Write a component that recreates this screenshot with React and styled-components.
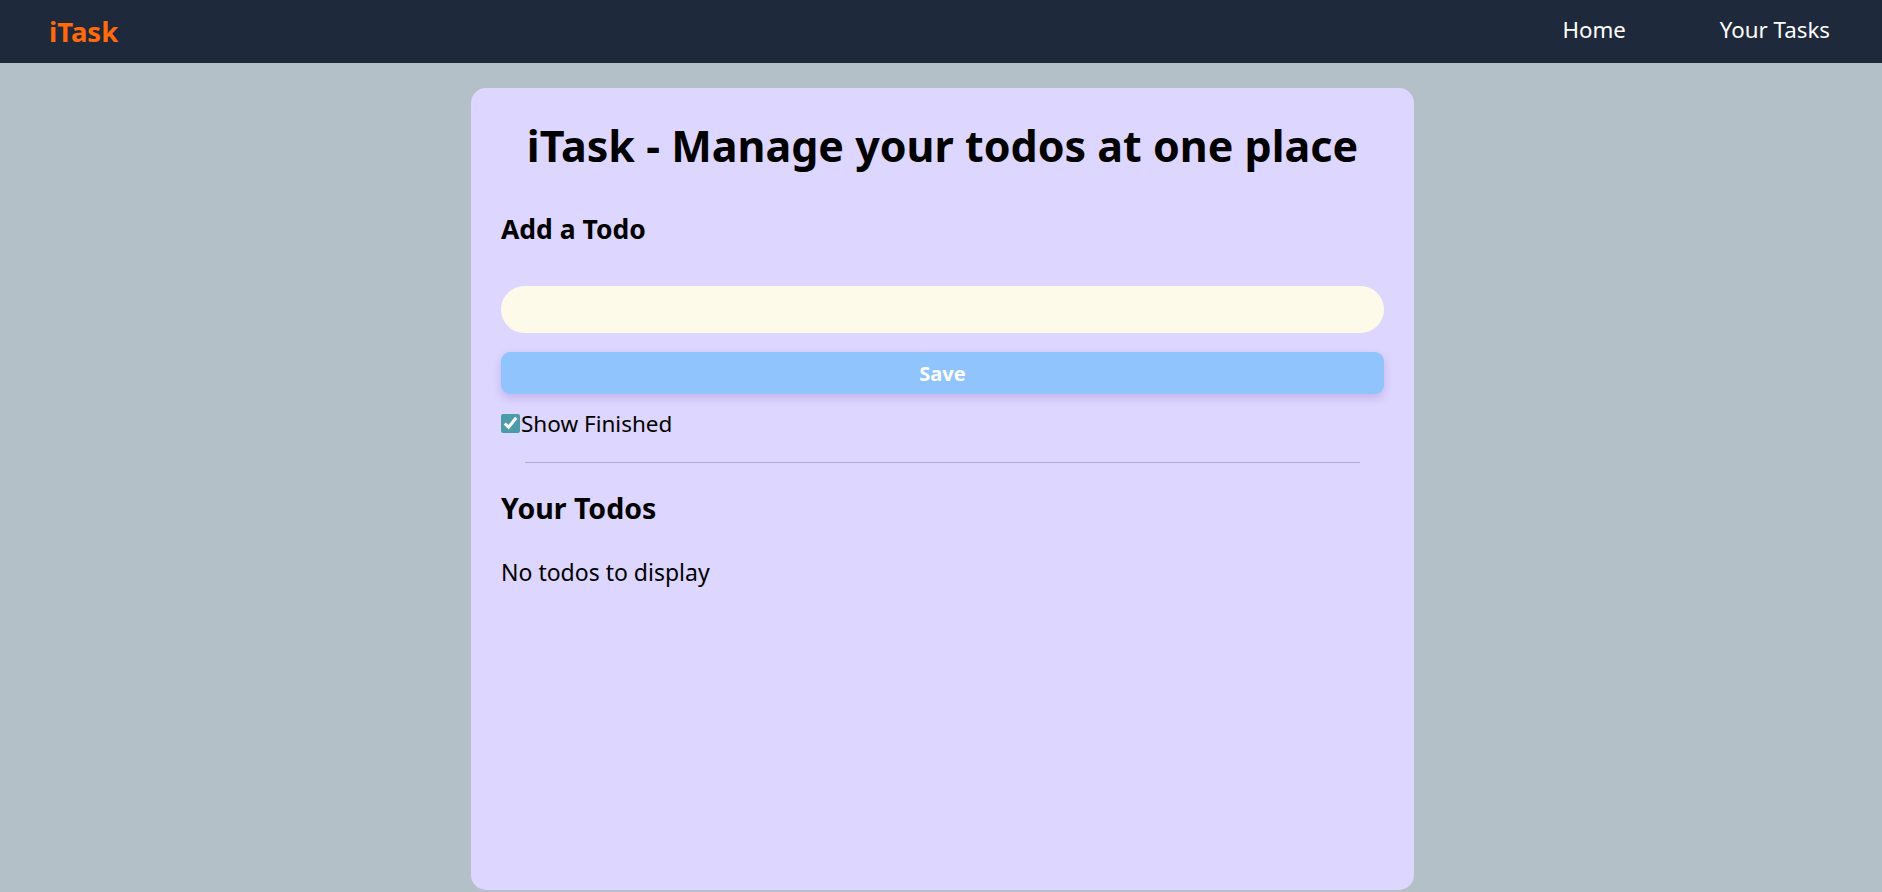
import { useState } from "react";
import styled, { createGlobalStyle } from "styled-components";

const navBg = "#1e293b";
const pageBg = "#b3c0c7";
const cardBg = "#ddd6fe";
const orange = "#ff6a0a";

const GlobalStyle = createGlobalStyle`
  * { box-sizing: border-box; }
  html, body {
    margin: 0;
    padding: 0;
    background: ${pageBg};
    font-family: "Noto Sans", "Open Sans", sans-serif;
    color: #000;
  }
`;

const App = () => {
  const [todo, setTodo] = useState("");
  const [showFinished, setShowFinished] = useState(true);

  return (
    <>
      <GlobalStyle />
      <Nav>
        <Logo>iTask</Logo>
        <NavList>
          <NavItem>Home</NavItem>
          <NavItem>Your Tasks</NavItem>
        </NavList>
      </Nav>
      <Card>
        <Title>iTask - Manage your todos at one place</Title>
        <SectionTitle>Add a Todo</SectionTitle>
        <TodoInput value={todo} onChange={(e) => setTodo(e.target.value)} />
        <SaveButton disabled={todo.length <= 3}>Save</SaveButton>
        <CheckRow>
          <Check
            type="checkbox"
            checked={showFinished}
            onChange={() => setShowFinished(!showFinished)}
          />
          Show Finished
        </CheckRow>
        <Divider />
        <TodosTitle>Your Todos</TodosTitle>
        <Empty>No todos to display</Empty>
      </Card>
    </>
  );
};

export default App;

const Nav = styled.nav`
  display: flex;
  justify-content: space-between;
  align-items: center;
  height: 63px;
  padding: 0 52px 0 49px;
  background: ${navBg};
  color: #fff;
`;

const Logo = styled.span`
  font-size: 27.5px;
  font-weight: 700;
  color: ${orange};
`;

const NavList = styled.ul`
  display: flex;
  gap: 94px;
  margin: 0 0 4px;
  padding: 0;
  list-style: none;
`;

const NavItem = styled.li`
  font-size: 22.3px;
  cursor: pointer;
`;

const Card = styled.main`
  display: flex;
  flex-direction: column;
  width: 943px;
  height: 802px;
  margin: 25px 0 0 calc(50% - 470px);
  padding: 33px 30px;
  background: ${cardBg};
  border-radius: 15px;
`;

const Title = styled.h1`
  margin: 0;
  font-size: 43px;
  line-height: 50px;
  font-weight: 700;
  text-align: center;
`;

const SectionTitle = styled.h2`
  margin: 41px 0 0;
  font-size: 26.5px;
  line-height: 35px;
  font-weight: 700;
`;

const TodoInput = styled.input`
  margin-top: 39px;
  height: 47px;
  padding: 0 20px;
  border: none;
  border-radius: 999px;
  background: #fefae9;
  font: inherit;
  font-size: 20px;
  outline: none;
`;

const SaveButton = styled.button`
  margin-top: 19px;
  height: 42px;
  border: none;
  border-radius: 9px;
  background: #8fc4fd;
  color: #fff;
  font: inherit;
  font-size: 20px;
  font-weight: 700;
  box-shadow: 0 4px 8px rgba(90, 70, 170, 0.22);
  cursor: pointer;
`;

const CheckRow = styled.label`
  display: flex;
  align-items: center;
  margin-top: 14px;
  font-size: 22.5px;
  line-height: 31px;
`;

const Check = styled.input`
  width: 19px;
  height: 19px;
  margin: 0 1px 0 0;
  accent-color: #4a9ca8;
`;

const Divider = styled.hr`
  width: calc(100% - 48px);
  margin: 23px auto 0;
  border: none;
  border-top: 1px solid #b4aad6;
`;

const TodosTitle = styled.h2`
  margin: 25px 0 0;
  font-size: 28.5px;
  line-height: 40px;
  font-weight: 700;
`;

const Empty = styled.p`
  margin: 28px 0 0;
  font-size: 23px;
  line-height: 32px;
`;
